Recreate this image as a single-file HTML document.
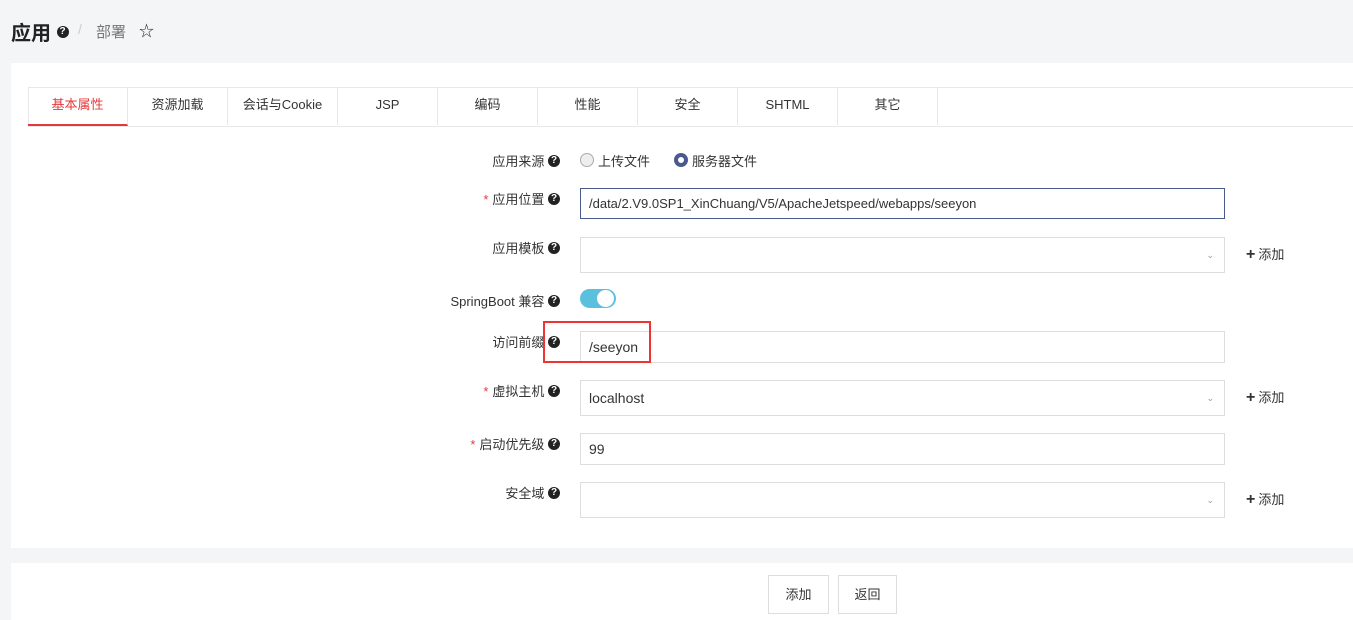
<!DOCTYPE html>
<html><head><meta charset="utf-8"><style>
body{margin:0;width:1353px;height:620px;background:#f4f5f7;font-family:"Liberation Sans","Noto Sans CJK SC",sans-serif;font-size:13px;color:#333;position:relative;overflow:hidden}
.a{position:absolute}
.q{display:inline-block;width:12px;height:12px;border-radius:50%;background:#222;color:#fff;font-size:10px;font-weight:bold;line-height:12px;text-align:center;vertical-align:middle;position:relative;top:-2px}
.tab{position:absolute;top:87px;height:38px;width:99px;border-right:1px solid #e8e8e8;text-align:center;line-height:36px;font-size:13px;color:#333}
.lab{position:absolute;right:793px;text-align:right;font-size:13px;color:#333}
.inp{position:absolute;left:580px;width:645px;border:1px solid #ddd;background:#fff;box-sizing:border-box;padding-left:8px;font-size:14px;color:#333}
.add{position:absolute;left:1246px;font-size:13px;color:#333}
.add b{font-size:16px;margin-right:3px}
.car{position:absolute;right:10px;color:#999;font-size:9px}
.r{color:#e4393c;margin-right:4px}
.btn{position:absolute;top:575px;height:39px;width:59px;border:1px solid #ddd;background:#fff;box-sizing:border-box;text-align:center;line-height:37px;font-size:13px}
</style></head><body>
<div class="a" style="left:11px;top:17px;font-size:20px;font-weight:bold;color:#222">应用 <span class="q" style="top:-3px">?</span></div>
<div class="a" style="left:78px;top:21px;color:#ccc;font-size:14px">/</div>
<div class="a" style="left:96px;top:21px;color:#777;font-size:15px">部署</div>
<div class="a" style="left:139px;top:20px;font-size:15px;color:#222">☆</div>
<div class="a" style="left:11px;top:63px;width:1342px;height:485px;background:#fff"></div>
<div class="a" style="left:11px;top:563px;width:1342px;height:57px;background:#fff"></div>
<div class="a" style="left:28px;top:87px;width:1325px;height:38px;border-top:1px solid #e8e8e8;border-bottom:1px solid #e8e8e8;border-left:1px solid #e8e8e8"></div>
<div class="tab" style="left:28px;color:#e4393c;border-bottom:2px solid #e4393c;height:37px">基本属性</div>
<div class="tab" style="left:128px">资源加载</div>
<div class="tab" style="left:228px;width:109px">会话与Cookie</div>
<div class="tab" style="left:338px">JSP</div>
<div class="tab" style="left:438px">编码</div>
<div class="tab" style="left:538px">性能</div>
<div class="tab" style="left:638px">安全</div>
<div class="tab" style="left:738px">SHTML</div>
<div class="tab" style="left:838px">其它</div>

<div class="lab" style="top:151px">应用来源 <span class="q">?</span></div>
<div class="a" style="left:580px;top:153px;width:14px;height:14px;border-radius:50%;border:1px solid #aaa;background:#eee;box-sizing:border-box"></div>
<div class="a" style="left:598px;top:151px">上传文件</div>
<div class="a" style="left:674px;top:153px;width:14px;height:14px;border-radius:50%;border:4px solid #4a5a8c;background:#fff;box-sizing:border-box"></div>
<div class="a" style="left:692px;top:151px">服务器文件</div>

<div class="lab" style="top:189px"><span class="r">*</span>应用位置 <span class="q">?</span></div>
<div class="inp" style="top:188px;height:31px;line-height:29px;border-color:#4a5a8c;font-size:13px">/data/2.V9.0SP1_XinChuang/V5/ApacheJetspeed/webapps/seeyon</div>

<div class="lab" style="top:238px">应用模板 <span class="q">?</span></div>
<div class="inp" style="top:237px;height:36px"><span class="car" style="top:12px">⌄</span></div>
<div class="add" style="top:244px"><b>+</b>添加</div>

<div class="lab" style="top:291px">SpringBoot 兼容 <span class="q">?</span></div>
<div class="a" style="left:580px;top:289px;width:36px;height:19px;border-radius:10px;background:#5bc0de"></div>
<div class="a" style="left:597px;top:290px;width:17px;height:17px;border-radius:50%;background:#fff"></div>

<div class="lab" style="top:332px">访问前缀 <span class="q">?</span></div>
<div class="inp" style="top:331px;height:32px;line-height:30px">/seeyon</div>
<div class="a" style="left:543px;top:321px;width:108px;height:42px;border:2px solid #e33;box-sizing:border-box"></div>

<div class="lab" style="top:381px"><span class="r">*</span>虚拟主机 <span class="q">?</span></div>
<div class="inp" style="top:380px;height:36px;line-height:34px">localhost<span class="car" style="top:0">⌄</span></div>
<div class="add" style="top:387px"><b>+</b>添加</div>

<div class="lab" style="top:434px"><span class="r">*</span>启动优先级 <span class="q">?</span></div>
<div class="inp" style="top:433px;height:32px;line-height:30px">99</div>

<div class="lab" style="top:483px">安全域 <span class="q">?</span></div>
<div class="inp" style="top:482px;height:36px"><span class="car" style="top:12px">⌄</span></div>
<div class="add" style="top:489px"><b>+</b>添加</div>

<div class="btn" style="left:768px;width:61px">添加</div>
<div class="btn" style="left:838px">返回</div>
</body></html>
